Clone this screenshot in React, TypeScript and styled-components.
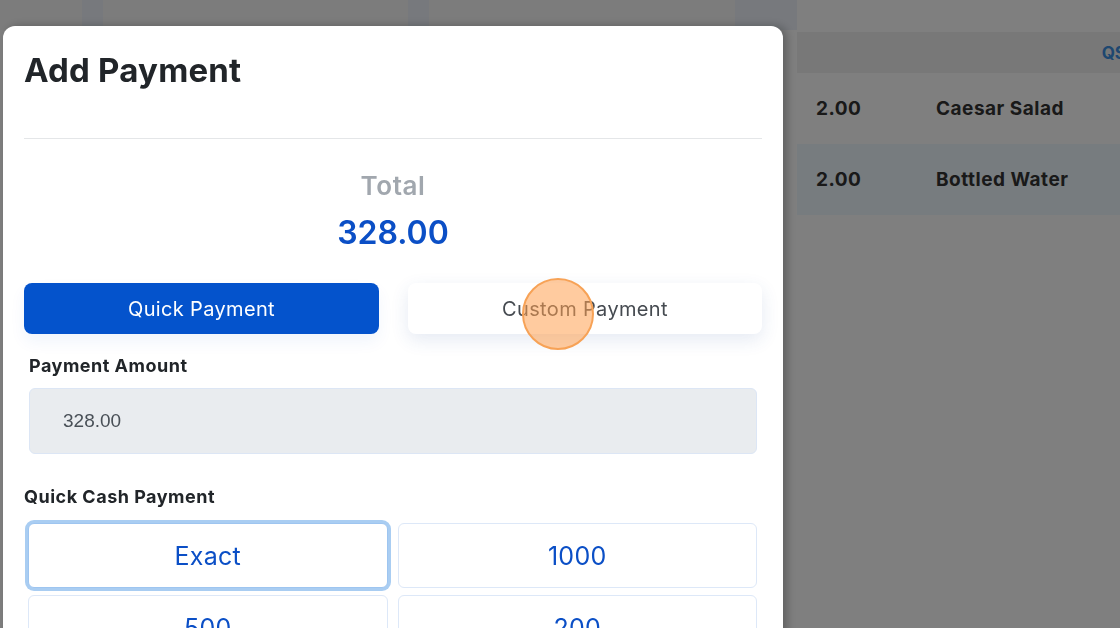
import React from 'react';
import styled, { createGlobalStyle } from 'styled-components';

const GlobalStyle = createGlobalStyle`
  html, body {
    margin: 0;
    padding: 0;
    width: 100%;
    height: 100%;
    overflow: hidden;
    background: #fefefe;
    font-family: Inter, "Noto Sans", sans-serif;
  }
  #root { height: 100%; }
  * { box-sizing: border-box; }
`;

const Page = styled.div`
  display: grid;
  grid-template-columns: 797px 1fr;
  width: 100vw;
  height: 100vh;
  background: #fefefe;
`;

const LeftArea = styled.div`
  display: flex;
  flex-direction: column;
`;

const TopStrip = styled.div`
  display: flex;
  height: 30px;
`;

const StripCell = styled.div<{ $w: number; $tint?: boolean }>`
  width: ${p => p.$w}px;
  background: ${p => (p.$tint ? '#eef3fb' : '#f9f9f9')};
`;

const RightPanel = styled.div`
  display: flex;
  flex-direction: column;
  padding-top: 32px;
`;

const TableHead = styled.div`
  height: 41px;
  background: #f0f0f0;
  display: flex;
  align-items: center;
  justify-content: flex-end;
  overflow: hidden;
  white-space: nowrap;
  color: #3c8fe0;
  font-weight: 700;
  font-size: 17px;
  margin-right: -6px;
`;

const Row = styled.div<{ $alt?: boolean }>`
  height: 71px;
  display: flex;
  align-items: center;
  padding-left: 19px;
  background: ${p => (p.$alt ? '#eff8fe' : 'transparent')};
  font-weight: 700;
  font-size: 19px;
  letter-spacing: 0.5px;
  color: #333;
`;

const Qty = styled.span`
  width: 120px;
`;

const Overlay = styled.div`
  position: fixed;
  inset: 0;
  background: rgba(0, 0, 0, 0.5);
`;

const Modal = styled.div`
  position: fixed;
  top: 26px;
  left: 3px;
  width: 780px;
  height: 640px;
  background: #fff;
  border-radius: 12px;
  box-shadow: 4px 0 10px rgba(0, 0, 0, 0.25);
  padding: 0 21px;
  display: flex;
  flex-direction: column;
`;

const Header = styled.div`
  height: 113px;
  border-bottom: 1.5px solid #e4e6e8;
  padding-top: 24px;
`;

const Title = styled.h2`
  margin: 0;
  font-size: 33px;
  font-weight: 700;
  color: #212529;
  letter-spacing: 0.2px;
`;

const TotalBlock = styled.div`
  display: flex;
  flex-direction: column;
  align-items: center;
  padding-top: 32px;
`;

const TotalLabel = styled.div`
  font-size: 26px;
  font-weight: 600;
  color: #a1a7ae;
  line-height: 30px;
  letter-spacing: 0.6px;
`;

const TotalValue = styled.div`
  font-size: 32px;
  font-weight: 600;
  color: #0b4fc6;
  line-height: 44px;
  margin-top: 10px;
`;

const Tabs = styled.div`
  display: grid;
  grid-template-columns: 355px 354px;
  justify-content: space-between;
  margin-top: 28px;
`;

const TabButton = styled.button<{ $active?: boolean }>`
  height: 51px;
  border: none;
  border-radius: 8px;
  font-family: inherit;
  font-size: 20px;
  letter-spacing: 0.35px;
  font-weight: 400;
  background: ${p => (p.$active ? '#0453cc' : '#fff')};
  color: ${p => (p.$active ? '#fff' : '#454a50')};
  box-shadow: ${p => (p.$active ? '0 8px 16px rgba(4, 83, 204, 0.06)' : '0 6px 18px rgba(40, 80, 160, 0.12)')};
`;

const Field = styled.div`
  padding: 0 5px;
  margin-top: 21px;
`;

const Label = styled.div`
  font-size: 18px;
  font-weight: 700;
  letter-spacing: 0.5px;
  color: #212529;
`;

const AmountInput = styled.div`
  margin-top: 12px;
  height: 66px;
  background: #e9ecef;
  border: 1px solid #dce6f5;
  border-radius: 6px;
  display: flex;
  align-items: center;
  padding-left: 33px;
  font-family: "Liberation Sans", Arial, sans-serif;
  font-size: 19px;
  color: #495057;
`;

const CashSection = styled.div`
  margin-top: 32px;
`;

const CashGrid = styled.div`
  display: grid;
  grid-template-columns: 1fr 1fr;
  gap: 7px 10px;
  margin-top: 16px;
  padding: 0 5px 0 4px;
`;

const CashButton = styled.button<{ $focus?: boolean }>`
  height: 65px;
  border-radius: 6px;
  background: #fff;
  font-family: inherit;
  font-size: 25px;
  letter-spacing: 0.3px;
  font-weight: 400;
  color: #0b4fc6;
  border: 1px solid #dde8f8;
  box-shadow: ${p => (p.$focus ? '0 0 0 3px #a9cdf2' : 'none')};
  ${p => (p.$focus ? 'border-color: #9ec5f0;' : '')}
`;

const Cursor = styled.div`
  position: fixed;
  left: 522px;
  top: 278px;
  width: 72px;
  height: 72px;
  border-radius: 50%;
  background: rgba(255, 160, 80, 0.55);
  border: 2px solid #f7a256;
`;

const cashOptions = ['Exact', '1000', '500', '200'];

export default function App() {
  return (
    <>
      <GlobalStyle />
      <Page>
        <LeftArea>
          <TopStrip>
            <StripCell $w={82} />
            <StripCell $w={21} $tint />
            <StripCell $w={305} />
            <StripCell $w={21} $tint />
            <StripCell $w={306} />
            <StripCell $w={62} $tint />
          </TopStrip>
        </LeftArea>
        <RightPanel>
          <TableHead>QS</TableHead>
          <Row>
            <Qty>2.00</Qty>
            Caesar Salad
          </Row>
          <Row $alt>
            <Qty>2.00</Qty>
            Bottled Water
          </Row>
        </RightPanel>
      </Page>
      <Overlay />
      <Modal>
        <Header>
          <Title>Add Payment</Title>
        </Header>
        <TotalBlock>
          <TotalLabel>Total</TotalLabel>
          <TotalValue>328.00</TotalValue>
        </TotalBlock>
        <Tabs>
          <TabButton $active>Quick Payment</TabButton>
          <TabButton>Custom Payment</TabButton>
        </Tabs>
        <Field>
          <Label>Payment Amount</Label>
          <AmountInput>328.00</AmountInput>
        </Field>
        <CashSection>
          <Label>Quick Cash Payment</Label>
          <CashGrid>
            {cashOptions.map((v, i) => (
              <CashButton key={v} $focus={i === 0}>
                {v}
              </CashButton>
            ))}
          </CashGrid>
        </CashSection>
      </Modal>
      <Cursor />
    </>
  );
}
